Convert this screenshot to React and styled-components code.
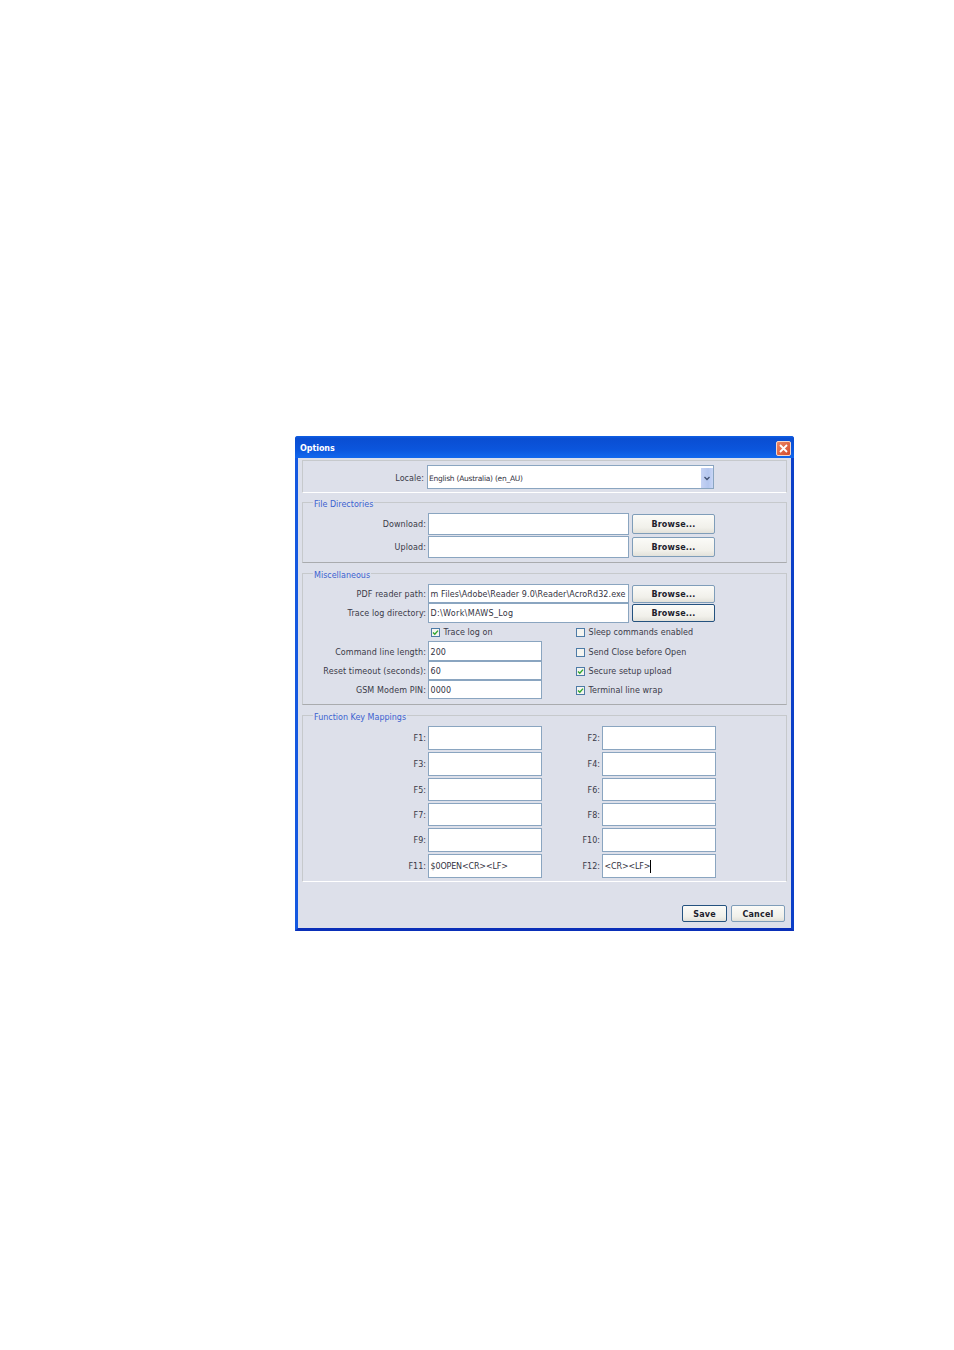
import React from "react";
import styled, { createGlobalStyle } from "styled-components";

const Global = createGlobalStyle`
  html, body { margin: 0; padding: 0; background: #fff; }
  body { font-family: "DejaVu Sans", sans-serif; }
`;
const Page = styled.div`
  padding: 436px 0 0 295px;
  height: 914px;
`;
const Win = styled.div`
  box-sizing: border-box;
  width: 499px;
  height: 495px;
  background: #dde0ea;
  border: 3px solid #1458e0;
  border-top: 0;
  border-bottom-color: #0a2fb8;
  border-right-color: #0b3fc8;
  border-radius: 3px 3px 0 0;
`;
const Title = styled.div`
  height: 22px;
  margin: 0 -3px;
  padding: 0 3px 0 5px;
  display: flex;
  align-items: center;
  justify-content: space-between;
  background: linear-gradient(#0f5fe4 0, #0a4ed2 12%, #0b55dc 60%, #1268ee 100%);
  border-radius: 3px 3px 0 0;
  color: #fff;
  font: bold 8px "DejaVu Sans", sans-serif;
  letter-spacing: -0.05px;
`;
const TitleText = styled.span`
  padding-top: 2px;
`;
const Close = styled.svg`
  width: 15px;
  height: 15px;
  margin-top: 3px;
  flex: none;
`;
const Body = styled.div`
  padding: 2px 4px 0;
`;
const Section = styled.section`
  position: relative;
  margin-top: ${p => p.$mt ?? 10}px;
  padding: 10px 0 ${p => p.$pb}px;
  border: 1px solid #c6c9cc;
  border-bottom-color: ${p => p.$light ? "#fff" : "#a9abae"};
  display: flex;
  flex-direction: column;
  gap: ${p => p.$gap}px;
`;
const Legend = styled.span`
  position: absolute;
  left: 10px;
  top: -3px;
  padding: 0 1px;
  background: #dde0ea;
  color: #3c62d0;
  font-size: 8px;
  line-height: 10px;
`;
const Row = styled.div`
  display: flex;
  align-items: center;
  height: ${p => p.$h}px;
`;
const Label = styled.label`
  flex: none;
  width: ${p => p.$w}px;
  margin-right: ${p => p.$mr ?? 2}px;
  text-align: right;
  white-space: nowrap;
  color: #3a3a48;
  font-size: 8px;
  letter-spacing: ${p => p.$ls ?? 0.1}px;
`;
const Box = styled.div`
  box-sizing: border-box;
  flex: none;
  width: ${p => p.$w}px;
  height: ${p => p.$h}px;
  padding-left: 1.5px;
  display: flex;
  align-items: center;
  overflow: hidden;
  background: #fff;
  border: 1px solid #8aa5c0;
  white-space: nowrap;
  color: #33333f;
  font-size: 8px;
  letter-spacing: ${p => p.$ls ?? 0.09}px;
`;
const Caret = styled.span`
  display: inline-block;
  width: 1px;
  height: 13px;
  background: #000;
`;
const Combo = styled(Box)`
  padding-left: 1px;
  justify-content: space-between;
  font-size: 7.5px;
  letter-spacing: -0.25px;
`;
const Arrow = styled.div`
  flex: none;
  width: 12px;
  height: 100%;
  display: flex;
  align-items: center;
  justify-content: center;
  background: linear-gradient(90deg, #c6d3f4, #b4c6ee 60%, #c8d6f6);
`;
const Btn = styled.div`
  box-sizing: border-box;
  flex: none;
  width: ${p => p.$w}px;
  height: ${p => p.$h}px;
  margin-left: ${p => p.$ml ?? 0}px;
  display: flex;
  align-items: center;
  justify-content: center;
  background: linear-gradient(#fbfbf8, #f1f0ea 70%, #e2e1da);
  border: 1px solid ${p => p.$focus ? "#24527f" : "#7f9db9"};
  border-radius: 2px;
  color: #20202c;
  font: bold 8px "DejaVu Sans", sans-serif;
  letter-spacing: 0.22px;
`;
const CheckCell = styled.div`
  flex: none;
  box-sizing: border-box;
  width: ${p => p.$width ? `${p.$width}px` : "auto"};
  display: flex;
  align-items: center;
  margin-left: ${p => p.$ml ?? 0}px;
  color: #3a3a48;
  font-size: 8px;
  letter-spacing: 0.05px;
  white-space: nowrap;
`;
const CheckBox = styled.span`
  box-sizing: border-box;
  flex: none;
  width: 9px;
  height: 9px;
  margin-right: 3.5px;
  display: flex;
  background: #f4f4f0;
  border: 1px solid #4d7ba6;
`;
const NudgedRow = styled(Row)`
  ${Label}, ${Box}, ${Btn}, ${CheckCell} {
    padding-top: 2px;
  }
`;
const TopPanel = styled.div`
  box-sizing: border-box;
  height: 33px;
  border: 1px solid #c6c9cc;
  border-bottom-color: #fff;
  display: flex;
  align-items: center;
  padding-top: 1px;
  ${Label}, ${Box} {
    padding-top: 2px;
  }
`;
const Footer = styled.div`
  display: flex;
  justify-content: flex-end;
  gap: 4px;
  margin: 23px 2px 0 0;
  ${Btn} {
    padding-top: 2px;
  }
`;

const Check = ({ on, children, ml, width }) => (
  <CheckCell $ml={ml} $width={width}>
    <CheckBox>
      {on && (
        <svg width="7" height="7" viewBox="0 0 7 7">
          <path d="M1 3.4 L2.8 5.2 L6 1.6" fill="none" stroke="#2ea52e" strokeWidth="1.4" />
        </svg>
      )}
    </CheckBox>
    {children}
  </CheckCell>
);

const misc = [
  ["Command line length:", "200", "Send Close before Open", false, 20],
  ["Reset timeout (seconds):", "60", "Secure setup upload", true, 19],
  ["GSM Modem PIN:", "0000", "Terminal line wrap", true, 19],
];
const keys = [
  ["F1:", "", "F2:", "", 24],
  ["F3:", "", "F4:", "", 24],
  ["F5:", "", "F6:", "", 23],
  ["F7:", "", "F8:", "", 23],
  ["F9:", "", "F10:", "", 24],
  ["F11:", "$0OPEN<CR><LF>", "F12:", "<CR><LF>", 24],
];

export default function App() {
  return (
    <Page>
      <Global />
      <Win>
        <Title>
          <TitleText>Options</TitleText>
          <Close viewBox="0 0 15 15">
            <defs>
              <linearGradient id="closeFill" x1="0" y1="0" x2="1" y2="1">
                <stop offset="0" stopColor="#ee8a68" />
                <stop offset="1" stopColor="#d2482a" />
              </linearGradient>
            </defs>
            <rect x="0.5" y="0.5" width="14" height="14" rx="1.5" fill="url(#closeFill)" stroke="#f4d8cc" />
            <path d="M4 4 L11 11 M11 4 L4 11" stroke="#fff" strokeWidth="1.8" />
          </Close>
        </Title>
        <Body>
          <TopPanel>
            <Label $w={121} $mr={3} $ls={0.05}>Locale:</Label>
            <Combo $w={287} $h={24}>
              English (Australia) (en_AU)
              <Arrow>
                <svg width="6" height="5" viewBox="0 0 6 5">
                  <path d="M0.5 1 L3 3.5 L5.5 1" fill="none" stroke="#3f4f70" strokeWidth="1.3" />
                </svg>
              </Arrow>
            </Combo>
          </TopPanel>

          <Section $mt={9} $pb={4} $gap={1}>
            <Legend>File Directories</Legend>
            <Row $h={22}>
              <Label $w={123}>Download:</Label>
              <Box $w={201} $h={22} />
              <Btn $w={83} $h={20} $ml={3}>Browse...</Btn>
            </Row>
            <Row $h={22}>
              <Label $w={123}>Upload:</Label>
              <Box $w={201} $h={22} />
              <Btn $w={83} $h={20} $ml={3}>Browse...</Btn>
            </Row>
          </Section>

          <Section $pb={5} $gap={0}>
            <Legend>Miscellaneous</Legend>
            <NudgedRow $h={19}>
              <Label $w={123}>PDF reader path:</Label>
              <Box $w={201} $h={19}>m Files\Adobe\Reader 9.0\Reader\AcroRd32.exe</Box>
              <Btn $w={83} $h={18} $ml={3}>Browse...</Btn>
            </NudgedRow>
            <NudgedRow $h={19}>
              <Label $w={123}>Trace log directory:</Label>
              <Box $w={201} $h={20} $ls={0.33}>D:\Work\MAWS_Log</Box>
              <Btn $w={83} $h={18} $ml={3} $focus>Browse...</Btn>
            </NudgedRow>
            <NudgedRow $h={19}>
              <Check on ml={128} width={145}>Trace log on</Check>
              <Check>Sleep commands enabled</Check>
            </NudgedRow>
            {misc.map(([l, v, c, on, h]) => (
              <NudgedRow $h={h} key={l}>
                <Label $w={123}>{l}</Label>
                <Box $w={114} $h={h}>{v}</Box>
                <Check on={on} ml={34}>{c}</Check>
              </NudgedRow>
            ))}
          </Section>

          <Section $pb={3} $gap={2} $light>
            <Legend>Function Key Mappings</Legend>
            {keys.map(([a, av, b, bv, h]) => {
              const KeyRow = h === 23 ? NudgedRow : Row;
              return (
                <KeyRow $h={h} key={a}>
                  <Label $w={123} $ls={0}>{a}</Label>
                  <Box $w={114} $h={h} $ls={-0.15}>{av}</Box>
                  <Label $w={58} $ls={0}>{b}</Label>
                  <Box $w={114} $h={h} $ls={-0.15}>
                    {bv}
                    {bv && <Caret />}
                  </Box>
                </KeyRow>
              );
            })}
          </Section>

          <Footer>
            <Btn $w={45} $h={17} $focus>Save</Btn>
            <Btn $w={54} $h={17}>Cancel</Btn>
          </Footer>
        </Body>
      </Win>
    </Page>
  );
}
